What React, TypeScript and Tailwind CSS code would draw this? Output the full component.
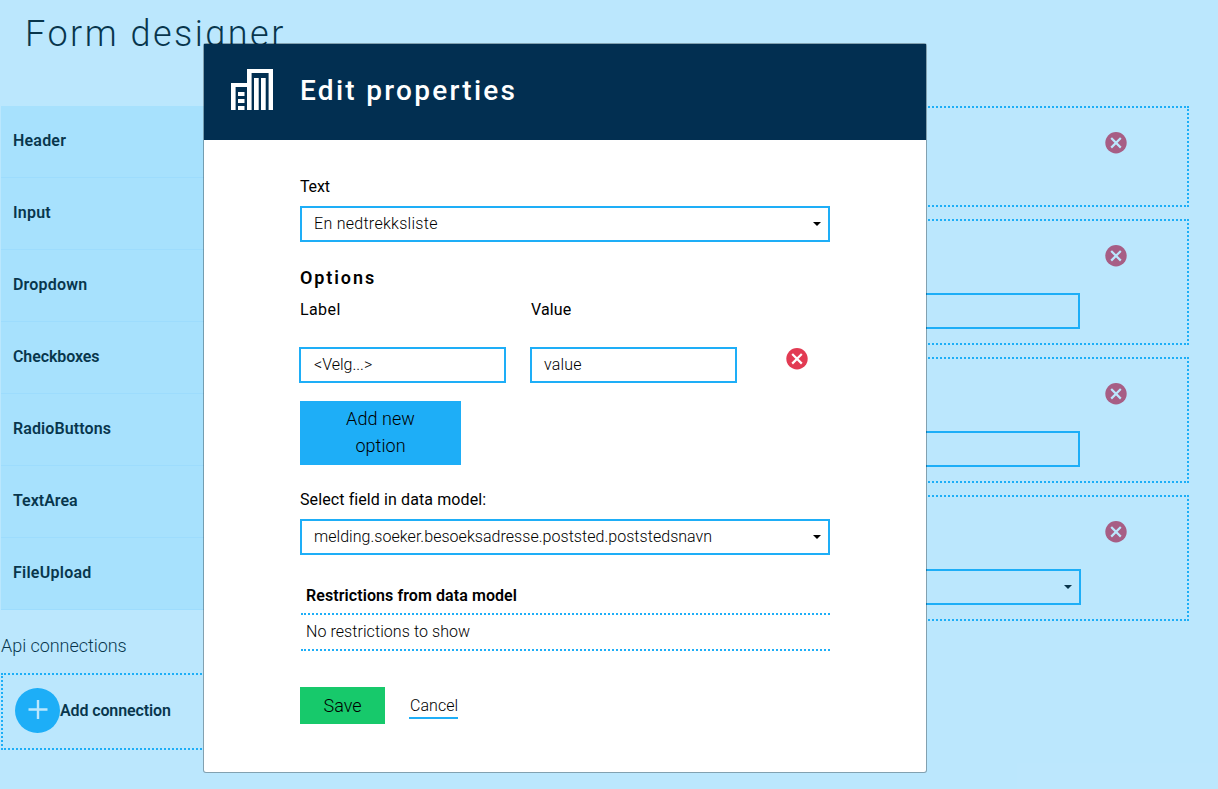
import { ReactNode } from "react";

const components = [
  { name: "Header", tracking: "tracking-[0.2px]" },
  { name: "Input", tracking: "tracking-[0.2px]" },
  { name: "Dropdown", tracking: "tracking-[0.2px]" },
  { name: "Checkboxes", tracking: "tracking-[-0.1px]" },
  { name: "RadioButtons", tracking: "tracking-[0.1px]" },
  { name: "TextArea", tracking: "tracking-[0px]" },
  { name: "FileUpload", tracking: "tracking-[0.25px]" },
];

function DeleteIcon() {
  return (
    <svg width="22" height="22" viewBox="0 0 22 22" className="block shrink-0">
      <circle cx="11" cy="10.8" r="10.7" fill="#e23b53" />
      <path d="M6.2 6l9.6 9.6M15.8 6l-9.6 9.6" stroke="#fff" strokeWidth="2.2" />
    </svg>
  );
}

function Caret() {
  return (
    <svg width="8" height="4" viewBox="0 0 8 4" className="block shrink-0">
      <path d="M0 0h8L4 4z" fill="#000" />
    </svg>
  );
}

function BuildingsIcon() {
  return (
    <svg width="42" height="41" viewBox="0 0 42 41" fill="#fff" className="block shrink-0">
      <path d="M0 14h16v4H4.6v23H0z" />
      <path d="M16 0h26v41h-4.4V4H20.6v37H16z" />
      <path d="M23 9h4.7v32H23zM30 9h4.7v32H30z" />
      <path d="M7 23h6.5v4H7zM7 30h6.5v4H7zM7 37h6.5v4H7z" />
    </svg>
  );
}

function Select({ children }: { children: ReactNode }) {
  return (
    <div className="flex h-9 w-[530px] items-center justify-between border-2 border-[#1eaef7] bg-white pl-3 pr-[7px] font-light">
      <span className="-mt-px leading-6">{children}</span>
      <Caret />
    </div>
  );
}

function Card({ field }: { field?: "input" | "select" }) {
  return (
    <div
      className={
        "flex flex-col border-2 border-dotted border-[#1eaef7] " +
        (field ? "h-[126px]" : "h-[101px]")
      }
    >
      <div className="flex h-[72px] justify-end pr-[60px] pt-6">
        <DeleteIcon />
      </div>
      {field === "input" && (
        <div className="ml-10 mr-[107px] h-9 shrink-0 border-2 border-[#1eaef7]" />
      )}
      {field === "select" && (
        <div className="ml-10 mr-[106px] flex h-9 shrink-0 items-center justify-end border-2 border-[#1eaef7] pr-[7px]">
          <Caret />
        </div>
      )}
    </div>
  );
}

function Designer() {
  return (
    <div className="h-[789px] w-[1218px]">
      <h1 className="h-[106px] pl-[25px] pt-[10px] text-4xl font-light leading-[48px] tracking-[2.5px]">
        Form designer
      </h1>
      <div className="flex pl-px">
        <aside className="w-[280px]">
          <ul>
            {components.map((c) => (
              <li
                key={c.name}
                className="flex h-[72px] items-center border-b border-[#d5efff] bg-[#e3f7ff] pb-px pl-3"
              >
                <span className={"font-semibold leading-6 " + c.tracking}>{c.name}</span>
              </li>
            ))}
          </ul>
          <h2 className="mt-[22px] text-lg font-light leading-7 tracking-[-0.05px]">Api connections</h2>
          <div className="mt-[13px] flex h-[77px] items-center border-2 border-dotted border-[#1eaef7] pl-3">
            <svg width="45" height="45" viewBox="0 0 45 45" className="mb-[2px] block shrink-0">
              <circle cx="22.5" cy="22.5" r="22.5" fill="#1eaef7" />
              <path d="M13.5 21.5h19M23 12v19" stroke="#fff" strokeWidth="2.4" />
            </svg>
            <span className="-mt-[2px] font-semibold leading-6 tracking-[-0.12px]">Add connection</span>
          </div>
        </aside>
        <main className="ml-10 flex w-[868px] flex-col gap-3">
          <Card />
          <Card field="input" />
          <Card field="input" />
          <Card field="select" />
        </main>
      </div>
    </div>
  );
}

function EditDialog() {
  return (
    <div
      role="dialog"
      className="h-[730px] w-[724px] rounded-[3px] border border-black/30 bg-white bg-clip-padding"
    >
      <header className="flex h-24 items-center bg-[#022f51] pl-[27px]">
        <div className="-mt-[6px]">
          <BuildingsIcon />
        </div>
        <h2 className="-mt-[3px] ml-[27px] text-[28px] font-medium leading-10 tracking-[2.28px] text-white">
          Edit properties
        </h2>
      </header>
      <div className="w-[626px] pl-24 pt-[35px]">
        <label className="block leading-6 tracking-[-0.15px]">Text</label>
        <div className="mt-[7px] tracking-[0.28px]">
          <Select>En nedtrekksliste</Select>
        </div>
        <h3 className="mt-6 text-lg font-semibold leading-6 tracking-[1.9px]">Options</h3>
        <div className="mt-2 flex leading-6">
          <label className="w-[231px] tracking-[0.4px]">Label</label>
          <label className="tracking-[0.1px]">Value</label>
        </div>
        <div className="-ml-px mt-[25px] flex font-light">
          <div className="flex h-9 w-[207px] items-center border-2 border-[#1eaef7] pl-[13px] tracking-[0px]">
            &lt;Velg...&gt;
          </div>
          <div className="ml-6 flex h-9 w-[207px] items-center border-2 border-[#1eaef7] pl-3 tracking-[0.2px]">
            value
          </div>
          <div className="ml-[49px] pt-px">
            <DeleteIcon />
          </div>
        </div>
        <button className="mt-[18px] flex h-16 w-[161px] justify-center bg-[#1eaef7] pt-1 text-lg font-light leading-[27px] tracking-[0.05px]">
          <span className="w-[80px] text-center">Add new option</span>
        </button>
        <label className="mt-[23px] block leading-6 tracking-[0.1px]">Select field in data model:</label>
        <div className="mt-[7px] tracking-[0.04px]">
          <Select>melding.soeker.besoeksadresse.poststed.poststedsnavn</Select>
        </div>
        <div className="ml-px mt-[22px]">
          <div className="h-[38px] border-b-2 border-dotted border-[#1eaef7] pl-[5px] pt-[7px] font-semibold leading-6 tracking-[0.08px]">
            Restrictions from data model
          </div>
          <div className="h-9 border-b-2 border-dotted border-[#1eaef7] pl-[5px] pt-[5px] font-light leading-6 tracking-[0.07px]">
            No restrictions to show
          </div>
        </div>
        <div className="mt-9 flex items-start font-light">
          <button className="h-[37px] w-[85px] bg-[#17c96b] text-lg leading-9 tracking-[0px]">
            Save
          </button>
          <button className="ml-6 mt-[7px] h-[25px] border-b-2 border-[#1eaef7] pl-px leading-6 tracking-[0.05px]">
            Cancel
          </button>
        </div>
      </div>
    </div>
  );
}

export default function App() {
  return (
    <div className="relative h-[789px] w-[1218px] overflow-hidden bg-white font-[Roboto,sans-serif] text-base text-black">
      <Designer />
      <div className="absolute inset-0 bg-[#1eaef7]/30 pl-[203px] pt-[43px]">
        <EditDialog />
      </div>
    </div>
  );
}
